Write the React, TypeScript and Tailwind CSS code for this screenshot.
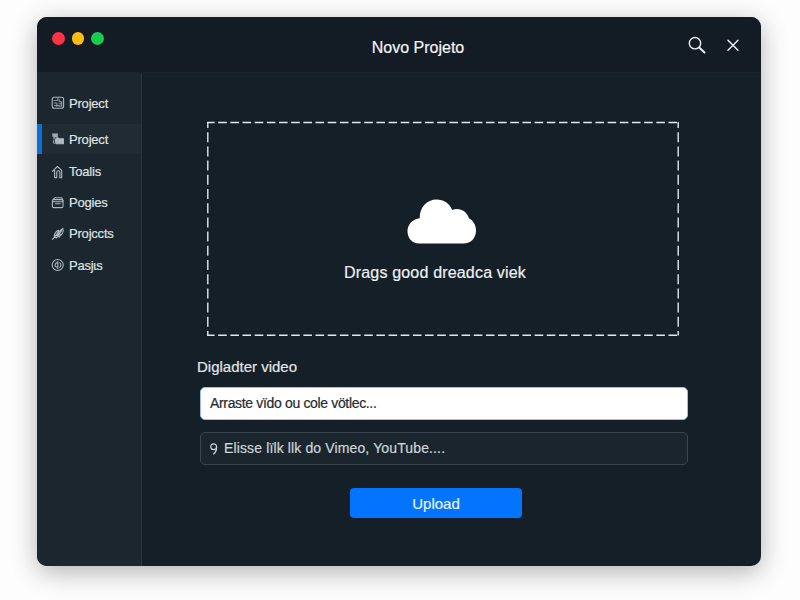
import type { ReactNode } from 'react';

type Item = { label: string; icon: ReactNode; row: string; active?: boolean };

function Glyph({ children }: { children: ReactNode }) {
  return (
    <svg
      viewBox="0 0 14 14"
      className="h-3.5 w-3.5 shrink-0"
      fill="none"
      stroke="#aeb8c0"
      strokeWidth="1.1"
      strokeLinecap="round"
      strokeLinejoin="round"
    >
      {children}
    </svg>
  );
}

const items: Item[] = [
  {
    label: 'Project',
    row: 'h-[30px] mb-[6px]',
    icon: (
      <Glyph>
        <rect x="1.2" y="1.3" width="11.4" height="11" rx="2" />
        <path d="M3 4.4h3.2M8.2 3.2v2.6h2.6M3.2 7h2.6v3.4M8 7.8h2.8M8 10.2h2.8M6.8 2v2.5M3.4 9.6h5M10.6 6v4" strokeWidth="0.8" />
      </Glyph>
    ),
  },
  {
    label: 'Project',
    row: 'h-[30px] mb-[2px]',
    active: true,
    icon: (
      <Glyph>
        <path d="M1.4 2h5.2v3.400H3.400L1.400 4z" fill="#8f9aa3" stroke="none" />
        <path d="M1.400 2h5.200M2 4h4.600M3 5v2" />
        <path d="M5.200 6h2.200l.6.800h4.400v5H5.200L4.200 9z" fill="#aeb8c0" />
        <path d="M2.400 8.600v2.600h1.400" strokeWidth="0.8" />
      </Glyph>
    ),
  },
  {
    label: 'Toalis',
    row: 'h-[31px]',
    icon: (
      <Glyph>
        <path d="M1.400 6.400 6.400 1.500l4.300 3.800v7.400H8.900V7.300c0-2-3.100-2-3.100 0v5.300H3.600V5.200" />
      </Glyph>
    ),
  },
  {
    label: 'Pogies',
    row: 'h-[31px]',
    icon: (
      <Glyph>
        <rect x="1.400" y="3.600" width="10.600" height="8" rx="1.400" />
        <path d="M2.200 3.400 3.800 1.800h7l1.200 2.800M2 5.800h9.800M4.600 7.800h4.600" />
      </Glyph>
    ),
  },
  {
    label: 'Projccts',
    row: 'h-[31px]',
    icon: (
      <Glyph>
        <path d="M1.400 12.400 5 8.600M3.400 10c-.6-3.400 2.200-6 4-6.800l.2 1.800 4.200-3.600c1 3-.6 5.800-2 6.800l-.4-1-1.200 3-1-1-2 1.800z" />
        <path d="M5 8.600 7.400 5M6.600 9 10.600 3.400" strokeWidth="1.500" />
      </Glyph>
    ),
  },
  {
    label: 'Pasjɩs',
    row: 'h-[32px]',
    icon: (
      <Glyph>
        <circle cx="6.700" cy="7" r="5.500" />
        <path d="M6.800 3.600v6.800M6.800 5C3.200 4 3.200 10 6.800 9M8.800 4.800c1.400 1.200 1.400 3.200 0 4.400" />
      </Glyph>
    ),
  },
];

function Sidebar() {
  return (
    <nav className="w-[105px] shrink-0 border-r border-[#2a353d] bg-[#1b262f] pt-[15px]">
      {items.map((item, i) => (
        <div
          key={i}
          className={`flex items-center text-[13px] tracking-[-0.200px] text-[#dde2e6] ${item.row} ${
            item.active ? 'bg-[#202b33]' : ''
          }`}
        >
          <span className={`mr-[9px] h-full w-[5px] ${item.active ? 'bg-[#0870d8]' : ''}`} />
          {item.icon}
          <span className="ml-1 leading-none">{item.label}</span>
        </div>
      ))}
    </nav>
  );
}

function DropZone() {
  return (
    <section className="relative ml-[65px] h-[215px] w-[472px]">
      <svg
        className="absolute inset-0 h-full w-full"
        viewBox="0 0 472 215"
        fill="none"
        stroke="#e2e8ec"
        strokeWidth="1.400"
      >
        <path d="M0 1.500h472M0 214.300h472" strokeDasharray="8.600 3.570" strokeDashoffset="1" />
        <path d="M.8 1v213.500M471.200 1v213.500" strokeDasharray="10 4.200" strokeDashoffset="4" />
      </svg>
      <div className="flex flex-col items-center pt-[78px]">
        <svg viewBox="0 0 70 45" className="mr-[2px] h-[45px] w-[70px]" fill="#fff">
          <path d="M12 44.500C5.200 44.500.5 39 .5 32.200.5 25.500 5.500 20 12.700 19.200 12.500 8.500 20 .5 29.500.5c7.200 0 13 4 15.700 10.400 7-2.800 15 1.200 16.700 8.400 4.400 2.200 7.100 6.800 7.100 12.400 0 7.300-5.200 12.800-12.500 12.800z" />
        </svg>
        <p className="mt-[19px] mr-[16px] whitespace-nowrap text-[16px] leading-5 tracking-[0.180px] text-[#eef1f3]">
          Drags good dreadca viek
        </p>
      </div>
    </section>
  );
}

export default function App() {
  return (
    <div className="h-[600px] w-[800px] overflow-hidden bg-[#fdfdfd] pt-[17px] pl-[37px] font-['Liberation_Sans',Arial,sans-serif] [-webkit-text-stroke:0.2px]">
      <div className="flex h-[549px] w-[724px] flex-col overflow-hidden rounded-[10px] bg-[#151f27] shadow-[0_6px_26px_rgba(0,0,0,0.3)]">
        <header className="grid h-[56px] shrink-0 grid-cols-[1fr_auto_1fr] border-b border-[#19242c] bg-[#131b24]">
          <div className="flex gap-[7px] pt-[15px] pl-[15px]">
            <span className="h-[12.500px] w-[12.500px] rounded-full bg-[#fb3448]" />
            <span className="h-[12.500px] w-[12.500px] rounded-full bg-[#fdbd12]" />
            <span className="h-[12.500px] w-[12.500px] rounded-full bg-[#18cc4e]" />
          </div>
          <h1 className="mr-[-19px] ml-[19px] pt-[21px] text-[16px] leading-5 text-[#f3f5f7]">Novo Projeto</h1>
          <div className="flex justify-end pt-[19px] pr-[20px]">
            <svg viewBox="0 0 18 18" className="mr-[19px] h-[18px] w-[18px]" fill="none" stroke="#e8edf2">
              <circle cx="7" cy="7.200" r="5.700" strokeWidth="1.400" />
              <path d="m11.200 11.500 5.300 5" strokeWidth="2" strokeLinecap="round" />
            </svg>
            <svg viewBox="0 0 16 18" className="h-[18px] w-[16px]" fill="none" stroke="#e8edf2" strokeWidth="1.500">
              <path d="M3 4.200 13 14.200M13 4.200 3 14.200" strokeLinecap="round" />
            </svg>
          </div>
        </header>
        <div className="flex min-h-0 grow">
          <Sidebar />
          <main className="grow pt-[48px]">
            <DropZone />
            <h2 className="mt-[22px] ml-[55px] text-[15px] leading-[18px] text-[#e2e6e9]">Digladter video</h2>
            <div className="mt-[11px] ml-[58px] flex h-[33px] w-[488px] items-center rounded-[5px] border border-[#9dc0e6] bg-white pl-[9px] text-[14px] tracking-[-0.340px] text-[#252b31]">
              <span className="whitespace-nowrap">Arraste vïdo ou cole vötlec...</span>
            </div>
            <div className="mt-[12px] ml-[58px] flex h-[33px] w-[488px] items-center rounded-[5px] border border-[#3b454d] bg-[#1b252d] pl-[9px] text-[14px] tracking-[0.130px] text-[#cfd5da]">
              <svg viewBox="0 0 8 12" className="mr-[6px] h-3 w-2" fill="none" stroke="#cfd5da" strokeWidth="1.200">
                <circle cx="3.700" cy="3.700" r="2.900" />
                <path d="M6.600 4c0 3-1 5.800-3.400 7.200" />
              </svg>
              <span className="whitespace-nowrap">Elisse lïlk llk do Vimeo, YouTube....</span>
            </div>
            <button className="mt-[23px] ml-[208px] block h-[30px] w-[172px] rounded-[4px] bg-[#0374fc] pt-px text-[15px] leading-[30px] text-[#e6f2ff]">
              Upload
            </button>
          </main>
        </div>
      </div>
    </div>
  );
}
